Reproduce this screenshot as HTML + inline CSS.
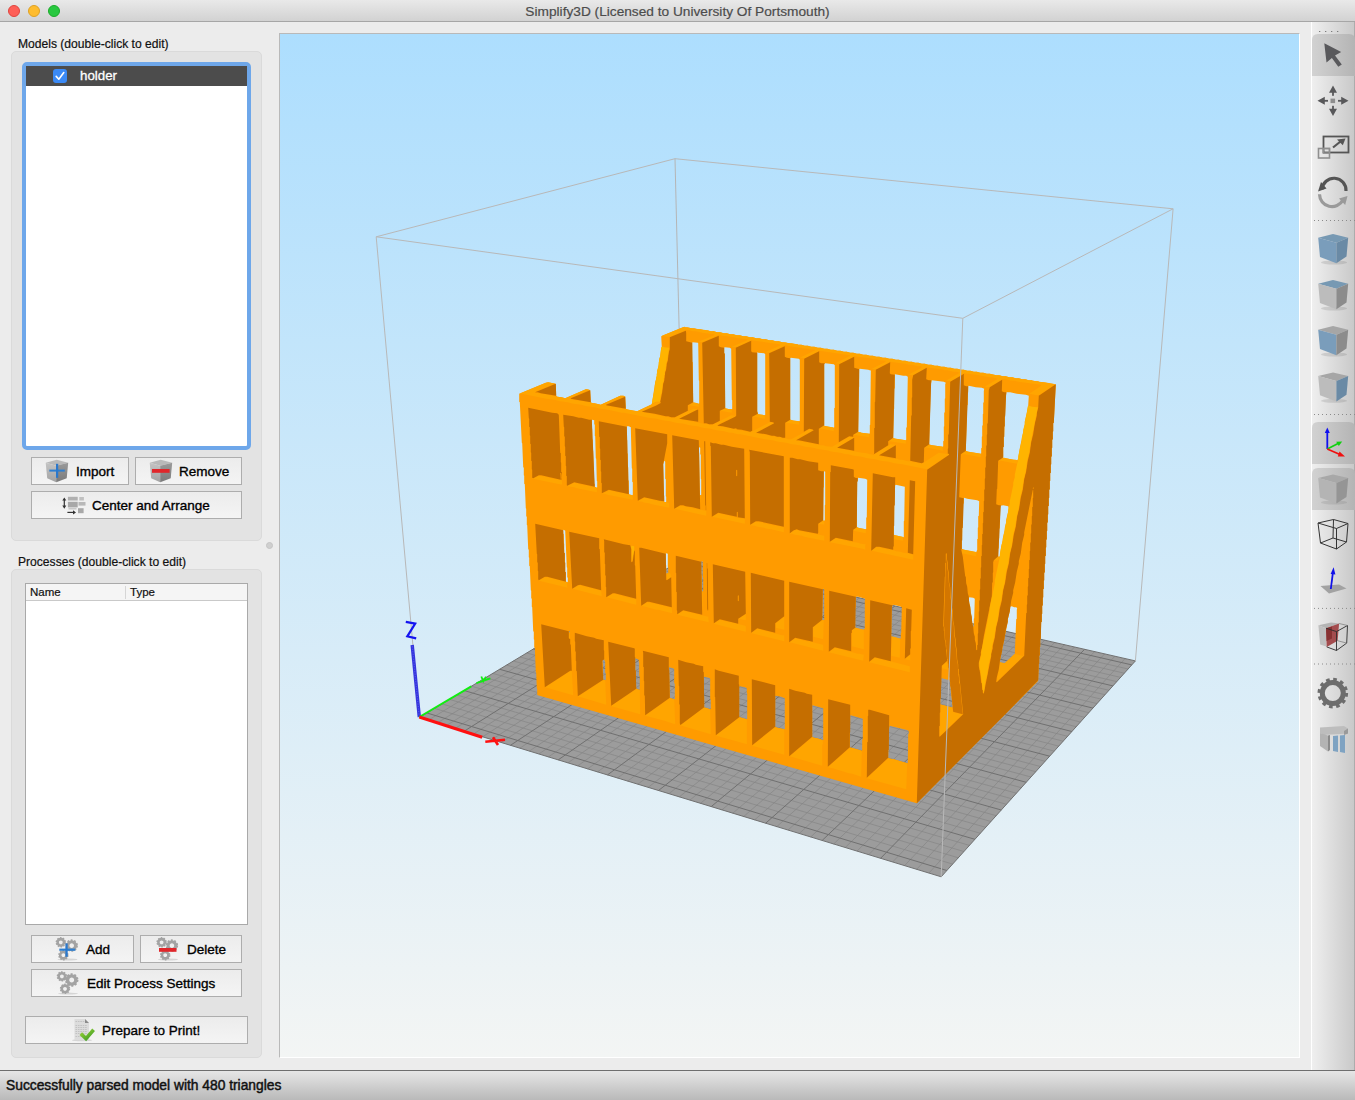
<!DOCTYPE html>
<html><head><meta charset="utf-8">
<style>
*{box-sizing:border-box;margin:0;padding:0}
html,body{width:1355px;height:1100px;overflow:hidden;background:#ececec;font-family:"Liberation Sans",sans-serif;color:#000}
.abs{position:absolute}
#title{left:0;top:0;width:1355px;height:22px;background:linear-gradient(#e9e9e9,#d2d2d2);border-bottom:1px solid #a6a6a6}
#title .t{position:absolute;left:0;width:1355px;top:4px;-webkit-text-stroke:0.2px #4c4c4c;text-align:center;font-size:13.7px;color:#4c4c4c}
.tl{position:absolute;top:5px;width:12px;height:12px;border-radius:50%}
.grp{position:absolute;background:#e3e3e3;border:1px solid #dadada;border-radius:5px}
.lbl{position:absolute;font-size:12.1px;color:#111;white-space:nowrap;-webkit-text-stroke:0.2px #111}
.btn{position:absolute;border:1px solid #adadad;background:linear-gradient(#ececec,#f4f4f4);font-size:13.5px;white-space:nowrap}
.btn span{position:absolute;top:6px;-webkit-text-stroke:0.35px #000}
#vp{left:279px;top:33px;width:1021px;height:1025px;background:linear-gradient(#addefe,#f3f5f4);border-top:1px solid #b9b9b9;border-left:1px solid #b9b9b9;border-right:1px solid #fff;border-bottom:1px solid #fff;overflow:hidden}
#tb{left:1311px;top:22px;width:44px;height:1048px;background:linear-gradient(90deg,#efefef,#c9c9c9);border-left:1px solid #fff;border-right:1px solid #acacac}
#status{left:0;top:1070px;width:1355px;height:30px;background:linear-gradient(#e6e6e6,#b9b9b9);border-top:1px solid #6e6e6e}
#status .t{position:absolute;left:6px;top:7px;font-size:13.8px;color:#111;white-space:nowrap;-webkit-text-stroke:0.45px #111}
</style></head><body>
<div id="title" class="abs">
  <div class="tl" style="left:8px;background:#fe5f57;border:0.5px solid #e0443e"></div>
  <div class="tl" style="left:28px;background:#febc2e;border:0.5px solid #dea123"></div>
  <div class="tl" style="left:48px;background:#28c840;border:0.5px solid #1aab29"></div>
  <div class="t">Simplify3D (Licensed to University Of Portsmouth)</div>
</div>

<!-- LEFT PANEL -->
<div class="lbl" style="left:18px;top:37px">Models (double-click to edit)</div>
<div class="grp" style="left:11px;top:51px;width:251px;height:490px"></div>
<div class="abs" style="left:22px;top:62px;width:229px;height:388px;border:4px solid #6ea7ea;border-radius:5px;background:#fff"></div>
<div class="abs" style="left:26px;top:66px;width:221px;height:20px;background:#4c4c4c"></div>
<div class="abs" style="left:53px;top:69px;width:14px;height:14px;background:#3b8af6;border-radius:3px"></div>
<svg class="abs" style="left:53px;top:69px" width="14" height="14"><path d="M3.2 7.4 L5.8 10.2 L10.8 3.6" stroke="#fff" stroke-width="1.6" fill="none" stroke-linecap="round" stroke-linejoin="round"/></svg>
<div class="lbl" style="left:80px;top:68px;font-size:13.3px;color:#fff;-webkit-text-stroke:0.3px #fff">holder</div>

<div class="btn" style="left:31px;top:457px;width:98px;height:28px"><span style="left:44px">Import</span></div>
<div class="btn" style="left:135px;top:457px;width:107px;height:28px"><span style="left:43px">Remove</span></div>
<div class="btn" style="left:31px;top:491px;width:211px;height:28px"><span style="left:60px">Center and Arrange</span></div>

<div class="abs" style="left:266px;top:542px;width:7px;height:7px;border-radius:50%;background:#cfcfcf;border:1px solid #c4c4c4"></div>

<div class="lbl" style="left:18px;top:555px">Processes (double-click to edit)</div>
<div class="grp" style="left:11px;top:569px;width:251px;height:489px"></div>
<div class="abs" style="left:25px;top:583px;width:223px;height:342px;border:1px solid #a9a9a9;background:#fff"></div>
<div class="abs" style="left:26px;top:584px;width:221px;height:17px;background:#f5f5f5;border-bottom:1px solid #c9c9c9"></div>
<div class="abs" style="left:125px;top:586px;width:1px;height:13px;background:#d6d6d6"></div>
<div class="lbl" style="left:30px;top:586px;font-size:11.5px">Name</div>
<div class="lbl" style="left:130px;top:586px;font-size:11.5px">Type</div>

<div class="btn" style="left:31px;top:935px;width:103px;height:28px"><span style="left:54px">Add</span></div>
<div class="btn" style="left:140px;top:935px;width:102px;height:28px"><span style="left:46px">Delete</span></div>
<div class="btn" style="left:31px;top:969px;width:211px;height:28px"><span style="left:55px">Edit Process Settings</span></div>
<div class="btn" style="left:25px;top:1016px;width:223px;height:28px"><span style="left:76px">Prepare to Print!</span></div>

<!-- VIEWPORT -->
<div id="vp" class="abs"></div>
<svg class="abs" style="left:0;top:0;pointer-events:none" width="1355" height="1100">
<defs><clipPath id="vpc"><rect x="280" y="34" width="1019" height="1023"/></clipPath></defs>
<g clip-path="url(#vpc)">
<polygon fill="#9c9c9c" points="419.4,717.5 941.2,876.8 1135.4,660.9 684.7,558.0"/>
<path stroke="#858585" stroke-width="0.7" fill="none" d="M428.3,720.2 L692.6,559.8 M437.2,723.0 L700.5,561.6 M446.2,725.7 L708.5,563.5 M455.2,728.4 L716.5,565.3 M473.4,734.0 L732.7,569.0 M482.6,736.8 L740.8,570.8 M491.8,739.6 L749.0,572.7 M501.1,742.5 L757.2,574.6 M519.9,748.2 L773.8,578.4 M529.4,751.1 L782.2,580.3 M538.9,754.0 L790.6,582.2 M548.5,756.9 L799.0,584.1 M567.9,762.9 L816.0,588.0 M577.7,765.9 L824.6,589.9 M587.6,768.9 L833.2,591.9 M597.5,771.9 L841.9,593.9 M617.6,778.0 L859.4,597.9 M627.7,781.1 L868.2,599.9 M637.9,784.2 L877.0,601.9 M648.2,787.3 L885.9,603.9 M668.9,793.7 L903.9,608.0 M679.3,796.9 L912.9,610.1 M689.9,800.1 L922.0,612.2 M700.5,803.3 L931.2,614.3 M721.9,809.9 L949.6,618.5 M732.8,813.2 L958.9,620.6 M743.7,816.5 L968.2,622.7 M754.6,819.9 L977.6,624.9 M776.8,826.6 L996.6,629.2 M788.0,830.1 L1006.1,631.4 M799.3,833.5 L1015.8,633.6 M810.7,837.0 L1025.4,635.8 M833.7,844.0 L1044.9,640.2 M845.3,847.5 L1054.7,642.5 M857.0,851.1 L1064.6,644.7 M868.7,854.7 L1074.6,647.0 M892.6,862.0 L1094.6,651.6 M904.6,865.6 L1104.7,653.9 M916.7,869.3 L1114.9,656.2 M928.9,873.1 L1125.1,658.5 M434.6,708.4 L952.7,864.1 M442.1,703.9 L958.3,857.8 M449.6,699.4 L963.9,851.5 M457.0,695.0 L969.5,845.4 M471.5,686.2 L980.4,833.3 M478.7,681.9 L985.7,827.3 M485.8,677.7 L991.0,821.5 M492.8,673.4 L996.2,815.7 M506.6,665.1 L1006.4,804.3 M513.4,661.0 L1011.5,798.7 M520.1,657.0 L1016.4,793.2 M526.8,653.0 L1021.3,787.7 M539.9,645.1 L1031.0,777.0 M546.4,641.2 L1035.8,771.7 M552.8,637.3 L1040.4,766.5 M559.2,633.5 L1045.1,761.3 M571.7,626.0 L1054.2,751.1 M577.9,622.3 L1058.7,746.1 M584.0,618.6 L1063.2,741.2 M590.0,615.0 L1067.5,736.3 M602.0,607.8 L1076.2,726.7 M607.8,604.3 L1080.4,722.0 M613.7,600.7 L1084.6,717.3 M619.4,597.3 L1088.8,712.7 M630.8,590.4 L1097.0,703.6 M636.5,587.0 L1101.0,699.1 M642.0,583.7 L1105.0,694.7 M647.6,580.4 L1109.0,690.3 M658.4,573.8 L1116.7,681.6 M663.8,570.6 L1120.6,677.4 M669.1,567.4 L1124.3,673.2 M674.4,564.2 L1128.1,669.0"/>
<path stroke="#707070" stroke-width="1.0" fill="none" d="M464.2,731.2 L724.6,567.1 M510.5,745.3 L765.5,576.5 M558.2,759.9 L807.5,586.0 M607.5,774.9 L850.6,595.9 M658.5,790.5 L894.9,606.0 M711.2,806.6 L940.4,616.4 M765.7,823.2 L987.1,627.0 M822.1,840.5 L1035.1,638.0 M880.6,858.3 L1084.6,649.3 M427.0,713.0 L946.9,870.5 M464.3,690.6 L974.9,839.3 M499.7,669.3 L1001.3,810.0 M533.4,649.0 L1026.2,782.3 M565.5,629.7 L1049.7,756.2 M596.0,611.4 L1071.9,731.5 M625.2,593.8 L1092.9,708.1 M653.0,577.1 L1112.9,685.9 M679.6,561.1 L1131.8,664.9 M419.4,717.5 L941.2,876.8 L1135.4,660.9 L684.7,558.0 Z"/>
<path stroke="#b5b5b5" stroke-width="1" fill="none" d="M684.7,558.0 L675.0,158.7"/>
<path fill="rgb(255,155,0)" d="M519.2 393.8 519.2 401.8 519.8 402.2 521.8 442.8 522.2 443.2 523.2 467.2 523.8 467.8 523.8 475.2 524.2 475.8 524.2 483.8 524.8 484.2 525.8 508.2 526.2 508.8 526.2 516.2 526.8 516.8 526.8 524.8 527.2 525.2 528.2 549.2 528.8 549.8 528.8 557.2 529.2 557.8 529.2 565.8 529.8 566.2 530.8 590.2 531.2 590.8 531.2 598.2 531.8 598.8 531.8 606.8 532.2 607.2 533.2 631.2 533.8 631.8 533.8 639.2 534.2 639.8 534.2 647.2 534.8 647.8 535.8 672.2 536.2 672.8 536.8 688.2 537.2 688.8 537.2 694.8 537.8 695.2 916.8 803.2 1037.8 681.2 1038.2 680.2 1038.8 663.8 1039.2 663.2 1039.2 655.8 1039.8 655.2 1039.8 647.2 1040.2 646.8 1040.2 639.2 1040.8 638.8 1041.2 622.2 1041.8 621.8 1041.8 614.2 1042.2 613.8 1042.2 605.8 1042.8 605.2 1042.8 597.8 1043.2 597.2 1043.2 589.2 1043.8 588.8 1043.8 580.8 1044.2 580.2 1044.2 572.8 1044.8 572.2 1044.8 564.2 1045.2 563.8 1045.2 556.2 1045.8 555.8 1045.8 547.8 1046.2 547.2 1046.2 539.8 1046.8 539.2 1046.8 531.2 1047.2 530.8 1047.2 522.8 1047.8 522.2 1047.8 514.8 1048.2 514.2 1048.2 506.2 1048.8 505.8 1048.8 498.2 1049.2 497.8 1049.2 489.8 1049.8 489.2 1049.8 481.2 1050.2 480.8 1050.2 473.2 1050.8 472.8 1050.8 464.8 1051.2 464.2 1051.2 456.8 1051.8 456.2 1051.8 448.2 1052.2 447.8 1052.2 439.8 1052.8 439.2 1052.8 431.8 1053.2 431.2 1053.2 423.2 1053.8 422.8 1055.8 384.2 1038.8 381.8 1038.2 381.2 1035.2 381.2 1031.8 380.2 1028.8 380.2 1025.2 379.2 1022.2 379.2 1018.8 378.2 1015.8 378.2 1012.2 377.2 1009.2 377.2 1005.8 376.2 1002.8 376.2 999.2 375.2 996.2 375.2 989.8 373.8 986.8 373.8 983.2 372.8 980.2 372.8 976.8 371.8 973.8 371.8 970.2 370.8 967.2 370.8 963.8 369.8 960.8 369.8 957.2 368.8 954.2 368.8 950.8 367.8 947.8 367.8 944.2 366.8 941.2 366.8 937.8 365.8 934.8 365.8 931.2 364.8 928.2 364.8 924.8 363.8 921.8 363.8 918.2 362.8 915.2 362.8 911.8 361.8 908.8 361.8 905.2 360.8 902.2 360.8 898.8 359.8 895.8 359.8 892.2 358.8 889.2 358.8 885.8 357.8 882.8 357.8 879.2 356.8 876.2 356.8 872.8 355.8 869.8 355.8 866.2 354.8 863.2 354.8 859.8 353.8 856.8 353.8 853.2 352.8 850.2 352.8 846.8 351.8 843.8 351.8 840.2 350.8 837.2 350.8 833.8 349.8 830.8 349.8 827.2 348.8 824.2 348.8 820.8 347.8 817.8 347.8 814.2 346.8 811.2 346.8 807.8 345.8 804.8 345.8 801.2 344.8 798.2 344.8 797.8 344.2 782.2 342.2 778.8 341.2 775.8 341.2 772.2 340.2 769.2 340.2 765.8 339.2 762.8 339.2 759.2 338.2 756.2 338.2 752.8 337.2 749.8 337.2 746.2 336.2 743.2 336.2 739.8 335.2 736.8 335.2 733.2 334.2 730.2 334.2 726.8 333.2 723.8 333.2 720.2 332.2 717.2 332.2 713.8 331.2 710.8 331.2 707.2 330.2 704.2 330.2 700.8 329.2 697.8 329.2 694.2 328.2 691.2 328.2 687.8 327.2 684.8 327.2 684.2 326.8 661.2 336.2 661.8 347.2 661.2 347.8 660.2 356.2 659.2 359.2 659.2 361.8 658.8 362.2 658.8 364.8 657.2 370.8 657.2 373.2 656.8 373.8 656.8 376.2 655.2 382.2 651.8 404.2 637.2 411.2 627.8 409.8 625.8 408.8 625.2 396.2 623.2 395.8 620.2 395.8 600.8 404.8 594.8 403.2 592.2 403.2 590.8 402.2 590.2 390.2 587.2 389.2 585.8 389.2 565.2 398.2 562.2 397.2 557.2 396.8 556.2 395.8 555.8 383.8 548.2 382.2 545.8 382.8ZM889.8 725.8 907.8 730.2 908.8 731.2 908.8 733.8 908.2 734.2 907.8 762.8 907.2 763.2 893.8 759.2 890.2 758.8 888.2 757.8 888.8 729.8ZM850.8 715.2 862.8 718.8 862.8 739.2 862.2 739.8 862.2 750.2 861.8 750.8 849.8 747.2 850.2 715.8ZM812.8 705.2 823.2 708.2 823.2 739.8 822.8 740.2 817.2 738.2 813.8 737.8 812.2 736.8 812.2 705.8ZM775.8 695.8 781.2 696.8 784.8 698.2 784.8 728.8 784.2 729.2 777.2 727.8 775.2 726.8 775.2 696.2ZM739.8 686.2 745.2 687.2 746.8 688.2 746.8 692.8 747.2 693.2 747.2 718.8 746.8 719.2 740.8 717.8 739.2 716.8 739.2 686.8ZM941.8 678.2 949.8 680.2 951.8 700.2 952.2 700.8 952.2 704.8 952.8 705.2 952.2 707.8 940.2 704.2 940.8 685.2 941.2 684.8 941.2 678.8ZM704.2 676.8 709.2 677.8 710.2 678.8 710.2 699.2 710.8 699.8 710.8 708.8 710.2 709.2 704.2 707.2 704.2 696.8 703.8 696.2 703.8 677.2ZM669.2 667.2 673.2 668.2 674.2 669.2 674.2 683.2 674.8 683.8 674.8 698.8 674.2 699.2 669.8 697.8 669.2 669.8 668.8 669.2ZM604.2 659.2 605.2 662.2 605.2 672.8 605.8 673.2 605.8 679.8 605.2 680.2 604.2 680.2 603.2 679.2 603.2 674.2 602.8 673.8 602.8 663.2 602.2 660.8ZM635.8 658.2 638.8 659.8 638.8 662.2 639.2 662.8 639.2 675.8 639.8 676.2 639.8 689.2 639.2 689.8 637.2 689.2 636.2 688.2 635.8 670.8 635.2 670.2 635.2 658.8ZM568.8 632.2 569.2 630.8 570.2 631.8 569.2 632.8ZM1011.8 606.2 1014.2 607.2 1016.2 607.2 1017.2 608.2 1016.8 609.8 1016.8 618.8 1016.2 619.2 1014.8 653.8 1004.8 663.2 1001.2 662.8 999.8 661.8 1007.8 621.8 1007.8 619.2 1009.8 611.2 1010.2 606.8ZM892.8 604.8 899.8 606.2 901.8 607.2 901.2 632.8 900.8 633.2 900.8 638.2 900.2 638.8 891.2 636.2 891.8 607.8ZM969.2 597.2 973.2 597.8 974.8 598.8 974.2 618.2 973.8 618.8 973.8 626.2 973.2 626.8 972.8 626.2 970.2 606.8 968.8 599.8ZM856.2 596.8 858.2 596.8 865.2 598.8 864.8 600.8 864.8 628.2 863.8 629.8 856.2 628.2 855.2 627.2 855.2 607.8 855.8 607.2 855.8 597.2ZM823.2 588.8 824.2 589.8 824.2 619.8 823.8 620.2 822.2 619.8 822.8 589.2ZM701.8 561.2 702.8 561.8 702.8 577.2 703.2 577.8 703.2 591.2 702.8 591.8 701.8 590.8 701.8 574.8 701.2 574.2 701.2 561.8ZM666.2 553.2 667.8 553.8 667.8 566.8 668.2 567.2 668.2 572.8 666.8 573.8 666.2 573.2 666.2 565.2 665.8 564.8 665.8 553.8ZM563.8 529.8 565.2 530.8 566.8 567.2 567.2 567.8 567.2 577.2 567.8 577.8 567.8 581.8 567.2 582.2 565.8 581.2 565.8 572.2 565.2 571.8 565.2 562.8 564.8 562.2 564.8 553.2 564.2 552.8 564.2 543.8 563.8 543.2 563.8 534.2 563.2 533.8 563.2 530.2ZM1003.2 505.2 1008.2 506.2 1008.8 508.8 1006.2 519.8 1006.2 522.2 1004.8 527.8 1004.8 530.2 1002.8 538.2 1002.8 540.8 1001.2 546.2 999.8 556.2 998.8 556.8 998.2 556.2 998.2 548.8 998.8 548.2 998.8 538.8 999.2 538.2 999.2 528.8 999.8 528.2 1000.2 508.2 1000.8 505.8ZM964.2 497.8 967.2 498.8 977.2 500.2 979.2 501.2 978.8 515.8 978.2 516.2 978.2 527.2 977.8 527.8 977.8 538.8 977.2 539.2 977.2 549.8 976.2 552.2 963.8 549.8 961.8 548.8 963.2 503.8 963.8 503.2 963.8 498.2ZM895.8 484.8 904.8 486.8 904.2 520.8 903.8 521.2 903.8 536.8 903.2 537.2 893.8 534.8 894.8 485.8ZM858.2 477.8 865.2 478.8 867.2 479.8 866.8 517.2 866.2 517.8 866.2 528.8 865.8 529.2 857.8 527.8 856.8 526.8 857.2 481.8ZM824.8 471.2 825.2 471.8 825.2 504.8 824.8 505.2 824.8 520.2 823.8 520.8 823.2 520.2 823.2 487.8 823.8 487.2 823.8 471.8ZM664.2 460.8 665.2 461.8 665.2 478.8 665.8 479.2 665.8 496.2 666.2 496.8 666.2 501.8 665.8 502.2 664.2 501.8 664.2 495.8 663.8 495.2 663.2 464.2ZM699.2 447.2 700.2 447.8 700.2 454.2 700.8 454.8 700.8 478.8 701.2 479.2 701.2 494.8 700.8 495.2 699.8 494.8 699.2 452.8 698.8 452.2 698.8 447.8ZM627.2 426.2 628.8 426.2 630.8 427.2 631.8 468.2 632.2 468.8 632.2 481.8 632.8 482.2 632.8 494.8 632.2 495.2 629.8 494.8 628.8 493.8 628.8 480.8 628.2 480.2 628.2 467.2 627.8 466.8 627.8 453.8 627.2 453.2 627.2 440.2 626.8 439.8 626.8 426.8ZM592.2 419.8 594.2 420.2 594.2 424.2 594.8 424.8 594.8 435.8 595.2 436.2 595.8 458.2 596.2 458.8 596.8 480.8 597.2 481.2 597.2 487.2 596.8 487.8 594.8 486.8 594.8 484.2 594.2 483.8 593.2 450.8 592.8 450.2 592.8 439.8 592.2 439.2 592.2 428.8 591.8 428.2 591.8 420.2ZM1006.8 391.8 1007.2 392.2 1010.2 392.2 1016.8 393.8 1025.8 394.8 1028.8 395.8 1028.2 405.8 1024.8 421.8 1024.8 424.2 1019.8 448.2 1018.2 458.8 1017.2 460.2 1004.8 458.2 1002.8 457.2 1003.2 456.8 1003.2 447.2 1003.8 446.8 1003.8 437.2 1004.2 436.8 1005.8 396.2ZM968.8 385.8 975.8 387.2 981.8 387.8 984.2 388.8 983.8 391.2 983.8 402.2 983.2 402.8 983.2 413.8 982.8 414.2 982.8 425.2 982.2 425.8 982.2 436.2 981.8 436.8 981.8 447.8 981.2 448.2 981.2 453.2 980.8 453.8 968.2 451.8 965.8 450.8 967.2 405.2 967.8 404.8 967.8 392.8 968.2 392.2 968.2 386.2ZM931.8 380.2 943.8 381.8 945.8 382.8 945.2 384.2 945.2 398.2 944.8 398.8 944.8 412.2 944.2 412.8 944.2 426.2 943.8 426.8 943.8 440.8 943.2 441.2 943.2 446.2 942.8 446.8 931.8 445.2 929.2 444.2 930.8 384.8ZM895.2 374.2 903.2 375.8 906.2 375.8 907.8 376.8 906.8 427.2 906.2 427.8 906.2 439.8 905.8 440.2 895.2 438.8 893.2 437.8 893.8 409.2 894.2 408.8 894.2 388.8 894.8 388.2 894.8 374.8ZM859.8 368.8 868.2 369.8 871.2 370.8 870.8 371.2 870.2 424.8 869.8 425.2 869.8 433.2 869.2 433.8 861.2 432.8 858.2 431.8 858.8 387.2 859.2 386.8 859.2 369.2ZM825.2 363.2 833.8 364.2 834.8 365.2 834.8 407.8 834.2 408.2 834.2 427.2 833.8 427.8 824.2 425.8 824.2 364.2ZM790.8 357.8 798.8 358.8 799.8 359.8 799.8 420.8 799.2 421.2 791.2 420.2 790.2 419.2 790.2 358.2ZM757.8 352.2 758.2 352.8 764.2 353.2 765.2 354.2 765.2 414.8 764.8 415.2 758.2 414.2 757.2 411.2 757.2 352.8ZM724.8 347.2 729.8 347.8 731.2 348.8 731.8 399.8 732.2 400.2 732.2 408.8 731.8 409.2 726.2 408.8 725.2 407.8 724.8 353.8 724.2 353.2 724.2 347.8ZM692.8 342.2 697.8 342.8 698.2 343.2 698.8 380.2 699.2 380.8 699.2 403.2 698.8 403.8 693.2 402.2 692.8 362.2 692.2 361.8 692.2 342.8Z"/>
<path fill="rgb(255,165,0)" d="M866.8 778.2 906.2 789.2 907.2 763.2 893.8 759.2 888.2 758.2ZM827.8 767.2 832.8 768.2 848.8 773.2 852.2 773.8 861.2 776.8 861.8 750.8 851.8 747.8 849.8 747.8ZM789.8 756.2 822.2 765.8 822.2 744.8 822.8 744.2 822.8 740.2 820.8 739.2 812.2 737.2ZM784.2 729.2 775.2 727.2 752.2 745.8 784.2 754.8ZM746.8 719.2 740.2 717.2 738.8 717.8 717.2 734.2 716.2 735.8 747.2 744.2 746.8 742.2ZM710.2 709.2 705.8 707.8 703.2 708.2 680.2 725.2 710.8 734.2ZM940.8 704.8 939.8 736.2 962.2 714.8 962.2 714.2 953.2 712.2 951.8 707.2ZM674.2 699.2 669.8 698.2 645.2 715.8 662.8 720.2 675.2 724.2ZM639.8 690.2 636.8 688.8 612.2 705.2 611.8 706.2 640.2 714.2ZM605.2 680.2 603.8 679.8 577.8 696.8 581.2 697.2 606.2 704.8ZM571.8 671.2 570.2 671.2 545.2 687.2 573.2 695.2ZM947.2 661.2 942.2 665.8 942.2 668.2 948.2 669.8ZM869.2 662.2 909.8 672.2 909.8 666.2 886.2 660.2 884.2 660.2 874.8 657.8ZM910.2 654.8 904.8 659.2 910.2 660.2ZM1023.2 656.2 1016.2 654.2 1014.2 654.2 1004.8 663.2 1000.2 662.2 996.8 681.8ZM828.8 652.2 863.2 660.8 863.8 654.8 859.8 653.8 857.8 653.8 835.2 647.8ZM789.8 642.2 823.2 650.8 823.2 645.2 822.8 644.8 808.8 641.2 806.8 641.2 795.2 638.2ZM891.8 636.8 891.2 655.8 899.8 657.8 900.2 638.8 893.8 636.8ZM569.8 632.2 569.2 632.8 569.2 638.2 570.2 638.8ZM751.8 632.8 751.8 633.2 784.2 641.2 784.2 635.2 782.2 635.2 757.8 628.8ZM855.8 627.8 852.2 630.2 852.2 632.8 851.8 633.2 851.8 646.2 863.8 649.2 863.8 629.8ZM822.2 620.2 813.2 627.2 813.2 636.8 823.2 639.2 823.8 620.2ZM713.8 623.8 745.8 631.8 745.8 626.2 745.2 625.8 731.2 622.2 729.2 622.2 719.8 619.8ZM784.2 616.8 775.8 623.2 775.8 627.8 784.2 629.8ZM745.8 614.2 738.8 618.8 745.8 620.2ZM677.2 614.8 708.8 622.2 708.2 616.8 683.2 610.8ZM641.8 605.8 656.2 609.8 658.2 609.8 672.2 613.2 671.8 607.8 655.8 603.8 647.2 602.2ZM606.8 597.2 636.2 604.8 636.2 599.2 627.2 597.2 614.8 593.8 612.8 593.8ZM702.2 591.2 702.8 609.8 703.2 609.8 702.8 591.8ZM572.8 588.8 601.8 596.2 601.2 590.8 580.2 585.2 578.8 585.2ZM539.2 580.2 539.2 580.8 567.8 587.8 567.2 586.8 567.2 582.2 547.2 577.2 544.8 577.2ZM670.2 573.2 667.2 573.2 666.8 573.8 666.8 579.8 671.2 576.8ZM999.2 556.8 998.2 556.8 996.2 558.2 994.8 560.2 998.2 560.8ZM961.8 549.2 962.2 553.2 976.2 556.2 976.2 552.2 975.2 551.8ZM871.8 550.8 913.2 559.8 913.2 554.8 910.2 553.8 903.2 552.8 900.8 551.8 896.2 551.2 893.8 550.2 886.8 549.2 879.2 547.2 876.2 547.2ZM830.2 541.8 830.2 542.2 862.8 548.8 865.2 549.8 865.2 545.2 865.8 544.8 865.2 544.2 860.8 543.8 858.2 542.8 851.2 541.8 836.8 538.2 834.8 538.8ZM894.2 535.2 894.2 539.2 902.8 540.8 903.2 539.2 902.8 536.8ZM790.2 533.2 790.2 533.8 792.2 533.8 794.8 534.8 801.8 535.8 804.2 536.8 824.2 540.8 824.2 535.8 799.2 530.8 796.8 529.8 793.8 530.8ZM853.8 529.8 853.8 530.8 865.8 533.2 865.8 529.2 859.8 528.2 857.2 527.2ZM750.2 525.2 754.8 525.8 757.2 526.8 764.2 527.8 766.8 528.8 771.2 529.2 783.8 532.2 783.8 527.2 763.8 523.2 761.2 522.2 755.8 521.8ZM824.2 520.8 822.8 520.8 819.8 522.8 819.2 523.8 824.2 524.8ZM712.2 516.8 744.8 523.8 744.8 518.8 737.8 517.8 718.8 513.2ZM674.8 508.8 706.2 515.8 706.2 510.8 695.2 508.8 683.2 505.8 680.2 505.8ZM637.8 501.2 642.2 501.8 644.8 502.8 649.2 503.2 651.8 504.2 669.2 507.8 669.2 503.2 668.8 502.8 652.8 499.8 650.2 498.8 644.2 497.8ZM700.2 495.2 700.2 498.8 700.8 498.8 700.8 495.2ZM602.8 493.2 602.8 493.8 604.8 493.8 607.2 494.8 632.8 499.8 632.8 496.2 631.2 494.8 626.8 494.2 624.2 493.2 617.2 492.2 609.8 490.2ZM567.8 485.8 567.8 486.2 574.2 487.2 576.8 488.2 596.8 492.2 596.8 487.8 595.8 487.2 591.2 486.8 588.8 485.8 581.8 484.8 574.2 482.8ZM532.8 478.8 562.2 484.8 561.8 480.2 548.8 477.8 546.2 476.8 538.8 475.8ZM998.8 460.8 1001.2 460.8 1016.8 463.8 1017.2 460.2 1015.8 459.8 1013.2 459.8 1004.2 457.8 1002.2 458.2ZM961.8 453.8 962.2 454.2 964.8 454.2 980.8 457.2 980.8 453.8 965.8 451.2ZM925.2 447.2 942.8 450.8 942.8 446.8 928.8 444.8ZM889.2 440.8 889.8 441.2 905.8 443.8 905.8 440.2 893.2 438.2ZM853.8 434.8 869.2 437.2 869.2 433.8 861.2 432.8 860.8 432.2 857.8 432.2ZM819.8 428.2 833.8 431.2 833.8 427.8 832.8 427.2 824.8 426.2 824.2 425.8ZM786.2 422.2 786.2 422.8 799.2 424.8 799.2 421.2 793.8 420.8 790.8 419.8ZM752.8 416.8 755.2 416.8 764.8 418.8 764.8 415.2 757.2 414.2ZM720.2 410.8 731.8 412.8 731.8 409.2 729.2 409.2 725.8 408.2ZM688.8 405.2 699.2 406.8 698.8 403.8 695.2 402.8 693.2 402.8ZM519.2 393.8 521.8 393.8 546.2 398.8 554.2 399.8 559.8 401.2 567.8 402.2 573.2 403.8 581.2 404.8 586.8 406.2 594.8 407.2 600.2 408.8 608.2 409.8 621.8 412.8 624.2 412.8 648.8 417.8 656.8 418.8 662.2 420.2 670.2 421.2 675.8 422.8 683.8 423.8 689.2 425.2 697.2 426.2 702.8 427.8 710.8 428.8 716.2 430.2 724.2 431.2 729.8 432.8 732.2 432.8 737.8 434.2 740.2 434.2 764.8 439.2 772.8 440.2 778.2 441.8 786.2 442.8 791.8 444.2 799.8 445.2 805.2 446.8 813.2 447.8 818.8 449.2 826.8 450.2 832.2 451.8 840.2 452.8 845.8 454.2 848.2 454.2 853.8 455.8 861.8 456.8 867.2 458.2 875.2 459.2 880.8 460.8 888.8 461.8 894.2 463.2 902.2 464.2 926.8 469.2 948.8 454.8 948.8 454.2 938.8 452.8 921.8 463.8 921.2 463.2 918.8 463.2 915.8 462.2 913.2 462.2 910.2 461.2 907.8 461.2 902.2 459.8 899.8 459.8 896.8 458.8 894.2 458.8 879.2 455.8 878.8 455.2 895.8 444.8 890.2 444.2 873.8 454.8 869.8 454.2 866.8 453.2 858.8 452.2 836.8 447.8 854.2 437.2 849.2 436.8 832.2 446.8 826.2 446.2 823.2 445.2 820.8 445.2 795.8 440.2 800.2 437.2 813.2 430.2 809.8 429.2 791.2 439.2 788.2 439.2 785.2 438.2 782.8 438.2 779.8 437.2 777.2 437.2 774.2 436.2 771.8 436.2 766.2 434.8 756.2 433.2 755.8 432.8 773.8 423.2 769.8 422.2 750.2 432.2 722.8 426.8 720.2 426.8 717.2 425.8 717.8 424.8 735.2 416.2 734.8 415.8 731.2 415.2 712.8 424.8 709.2 424.8 706.2 423.8 703.8 423.8 678.8 418.8 683.8 415.8 684.8 415.8 697.2 409.2 698.2 409.2 693.2 408.8 674.8 417.8 671.2 417.8 641.2 411.8 660.8 402.8 659.2 402.2 656.2 402.2 637.2 411.2 605.8 405.2 606.2 404.2 625.2 396.2 623.2 395.8 620.2 395.8 600.8 404.8 586.8 401.8 573.2 399.8 570.2 398.8 570.8 397.8 589.8 389.8 585.8 389.2 565.2 398.2 543.2 393.8 535.2 392.8 534.8 392.2 537.2 390.8 555.2 383.8 548.2 382.2 545.8 382.8ZM661.8 335.8 666.8 336.8 670.2 336.8 685.2 330.2 689.2 330.2 692.8 331.2 695.8 331.2 702.2 332.8 714.2 334.2 714.8 334.8 713.2 335.8 698.2 341.8 700.8 341.8 701.2 342.2 704.8 341.2 717.8 335.2 721.2 335.2 721.8 335.8 731.2 336.8 737.8 338.2 747.2 339.2 747.8 339.8 746.2 340.8 731.8 346.8 733.2 347.2 737.2 346.8 751.2 340.2 779.2 344.2 780.8 345.2 765.2 352.2 767.8 352.8 770.8 352.2 785.2 345.2 795.8 347.2 801.8 347.8 802.2 348.2 808.2 348.8 808.8 349.2 814.8 349.8 815.2 350.2 799.8 357.8 802.2 357.8 802.8 358.2 804.2 358.2 819.2 350.8 849.8 355.2 850.2 355.8 835.2 363.2 839.8 363.8 854.2 356.2 869.8 358.2 873.2 359.2 876.2 359.2 879.8 360.2 885.2 360.8 885.8 361.2 884.8 362.2 871.8 368.8 875.2 369.8 889.8 361.8 905.2 363.8 908.8 364.8 911.8 364.8 918.2 366.2 921.2 366.2 921.8 367.2 919.8 368.8 908.2 374.8 912.8 375.2 926.8 367.2 943.8 369.8 944.2 370.2 947.2 370.2 953.8 371.8 956.8 371.8 959.8 372.8 945.8 380.8 950.8 381.2 963.8 373.2 976.2 374.8 989.2 377.2 992.2 377.2 997.8 378.8 984.8 386.8 985.8 387.2 989.2 387.2 1002.2 379.2 1005.2 379.2 1011.8 380.8 1014.8 380.8 1018.2 381.8 1040.8 384.8 1041.2 385.8 1029.2 393.8 1036.8 395.2 1039.8 394.8 1055.2 384.2 1044.8 382.2 1038.8 381.8 1038.2 381.2 1032.2 380.8 1031.8 380.2 1028.8 380.2 1025.2 379.2 1022.2 379.2 1018.8 378.2 1015.8 378.2 1012.2 377.2 1009.2 377.2 1005.8 376.2 1002.8 376.2 999.2 375.2 996.2 375.2 989.8 373.8 986.8 373.8 983.2 372.8 980.2 372.8 976.8 371.8 973.8 371.8 970.2 370.8 967.2 370.8 963.8 369.8 960.8 369.8 957.2 368.8 954.2 368.8 950.8 367.8 947.8 367.8 944.2 366.8 941.2 366.8 937.8 365.8 934.8 365.8 931.2 364.8 928.2 364.8 924.8 363.8 921.8 363.8 918.2 362.8 915.2 362.8 911.8 361.8 908.8 361.8 905.2 360.8 902.2 360.8 898.8 359.8 895.8 359.8 892.2 358.8 889.2 358.8 885.8 357.8 882.8 357.8 879.2 356.8 876.2 356.8 872.8 355.8 869.8 355.8 866.2 354.8 863.2 354.8 859.8 353.8 856.8 353.8 853.2 352.8 850.2 352.8 846.8 351.8 843.8 351.8 840.2 350.8 837.2 350.8 833.8 349.8 830.8 349.8 827.2 348.8 824.2 348.8 820.8 347.8 817.8 347.8 814.2 346.8 811.2 346.8 807.8 345.8 804.8 345.8 801.2 344.8 798.2 344.8 791.8 343.2 788.8 343.2 785.2 342.2 782.2 342.2 778.8 341.2 775.8 341.2 772.2 340.2 769.2 340.2 765.8 339.2 762.8 339.2 759.2 338.2 756.2 338.2 752.8 337.2 749.8 337.2 746.2 336.2 743.2 336.2 739.8 335.2 736.8 335.2 733.2 334.2 730.2 334.2 726.8 333.2 723.8 333.2 720.2 332.2 717.2 332.2 713.8 331.2 710.8 331.2 707.2 330.2 684.8 327.2 684.2 326.8Z"/>
<path fill="rgb(197,110,0)" d="M869.8 709.8 868.2 709.8 868.2 715.8 867.8 716.2 867.8 741.8 867.2 742.2 866.8 777.8 888.2 757.8 888.2 750.2 888.8 749.8 889.2 715.2ZM828.2 699.2 827.8 766.8 849.8 747.2 849.8 732.8 850.2 732.2 850.2 704.8ZM789.2 688.8 789.2 756.2 812.2 736.8 812.2 694.8 806.8 693.8 804.8 692.8 795.2 690.8ZM751.8 679.2 752.2 745.2 775.2 726.8 775.2 685.2ZM714.8 669.2 714.8 696.8 715.2 697.2 715.8 735.2 739.2 717.2 739.2 684.8 738.8 684.2 738.8 675.8 718.8 670.8ZM678.2 659.8 678.8 685.8 679.2 686.2 679.2 704.2 679.8 704.8 679.8 723.2 680.2 724.8 680.8 724.8 704.2 707.2 703.8 672.2 703.2 671.8 703.2 666.2 695.8 664.8 693.8 663.8 686.2 662.2ZM642.8 650.8 643.2 652.8 643.2 666.8 643.8 667.2 643.8 680.8 644.2 681.2 644.2 695.2 644.8 695.8 645.2 715.2 669.8 697.8 669.2 669.8 668.8 669.2 668.8 657.2ZM608.2 641.8 611.2 705.8 636.2 688.8 635.8 670.8 635.2 670.2 635.2 657.2 634.8 656.8 634.8 648.8 634.2 648.2ZM574.8 632.8 574.8 641.2 575.2 641.8 575.2 651.2 575.8 651.8 575.8 660.8 576.2 661.2 576.2 670.8 576.8 671.2 577.8 696.2 603.2 679.8 602.2 660.8 604.2 659.2 604.2 650.8 603.8 650.2 603.8 640.2 596.2 638.8 594.2 637.8 586.8 636.2ZM541.2 624.2 544.8 687.2 570.2 670.8 571.8 670.8 570.8 644.8 570.2 644.2 570.2 639.2 568.8 638.2 568.8 631.2ZM906.2 608.2 904.8 658.8 910.2 654.2 910.2 648.8 910.8 648.2 910.8 631.2 911.2 630.8 911.8 609.8ZM870.2 600.2 869.2 661.8 874.8 657.2 890.8 661.2 891.8 607.8 892.2 605.2ZM829.2 590.8 828.8 651.8 834.8 647.2 851.2 651.2 851.2 633.2 851.8 632.8 851.8 630.2 855.2 627.8 855.8 596.8ZM789.2 581.8 789.2 642.2 795.2 637.8 812.8 641.8 812.8 627.2 822.2 619.8 822.8 589.2ZM750.8 572.8 751.2 632.8 757.2 628.2 775.2 632.8 775.2 623.2 784.2 616.2 784.2 580.8ZM712.8 564.2 713.8 623.2 719.8 619.2 738.2 623.8 738.2 618.8 745.8 613.8 745.2 571.8ZM738.2 595.2 738.8 595.8 738.8 600.8 738.2 601.2 737.8 600.8 737.8 595.8ZM706.8 562.8 707.2 608.8 707.8 610.8 708.2 610.2 707.8 568.8 707.2 568.2 707.2 563.2ZM675.8 555.8 675.8 572.8 676.2 573.2 676.2 591.8 676.8 592.2 676.8 610.2 677.2 610.8 677.2 614.2 683.2 610.2 702.2 614.8 701.2 561.8ZM639.2 547.8 641.2 605.8 647.2 601.8 649.2 601.8 671.8 607.2 671.2 577.2 666.8 580.2 666.2 579.8 665.8 553.8 641.2 547.8ZM603.8 539.2 604.2 541.2 604.2 552.2 604.8 552.8 604.8 563.8 605.2 564.2 605.2 575.2 605.8 575.8 605.8 586.8 606.2 587.2 606.2 597.2 612.8 593.2 614.8 593.2 636.2 598.8 635.2 565.8 634.8 565.2 634.8 551.8 634.2 550.2 632.8 561.2 631.8 562.2 631.2 561.8 631.2 548.8 630.2 545.2 623.8 544.2ZM569.2 531.8 572.2 588.8 577.8 585.2 580.2 584.8 601.2 590.2 599.8 549.2 599.2 548.8 599.2 538.2ZM535.2 523.8 536.8 553.8 537.2 554.2 537.2 562.2 537.8 562.8 537.8 570.8 538.2 571.2 538.2 579.2 538.8 580.2 544.8 576.8 547.2 576.8 566.2 581.8 565.8 581.2 565.8 572.2 565.2 571.8 565.2 562.8 564.8 562.2 564.8 553.2 564.2 552.8 563.2 530.2ZM909.8 480.2 907.8 552.8 913.2 554.2 915.2 481.2ZM872.8 473.2 871.2 550.8 876.2 546.8 879.2 546.8 893.2 549.8 893.2 546.8 893.8 546.2 893.8 526.2 894.2 525.8 894.2 505.8 894.8 505.2 895.2 477.2 892.8 477.2ZM830.8 465.2 830.8 471.8 830.2 472.2 829.8 541.8 835.8 537.8 852.8 541.2 853.2 529.8 856.8 527.2 857.2 481.8 857.8 481.2 857.8 478.2 855.2 477.8 853.8 476.8 853.8 469.8 852.8 469.2ZM789.8 457.8 789.8 533.2 793.8 530.2 796.8 529.2 799.2 530.2 817.8 533.8 818.2 532.8 818.2 523.8 823.2 520.2 823.8 471.2 821.2 471.2 818.2 470.2 818.2 462.8 808.2 461.2 800.2 459.2 797.8 459.2 792.2 457.8ZM749.2 449.8 749.8 452.2 750.2 524.8 755.8 521.2 758.8 521.2 783.8 526.8 783.8 456.2ZM895.8 445.2 879.2 455.2 895.8 458.2ZM710.2 442.2 710.2 445.8 710.8 446.2 711.8 516.8 718.2 512.8 736.8 516.8 736.8 512.2 737.2 511.8 737.8 512.2 737.8 517.2 744.8 518.2 744.2 448.8 731.8 446.8 723.8 444.8 721.2 444.8 715.8 443.2 713.2 443.2ZM736.8 469.8 737.2 470.2 737.2 475.8 736.8 476.2 736.2 475.8 736.2 470.2ZM704.2 441.2 705.2 505.2 705.8 505.8 705.8 510.2 706.2 510.2 705.2 441.2ZM854.2 437.8 837.2 447.8 854.2 450.8ZM672.2 435.2 674.2 508.8 680.2 505.2 683.2 505.2 685.8 506.2 692.8 507.2 700.2 509.2 698.8 440.2ZM635.2 428.2 637.8 500.8 644.2 497.2 659.8 500.8 664.2 501.2 663.2 464.2 667.2 443.2 667.2 434.2ZM598.8 421.2 599.2 436.8 599.8 437.2 599.8 448.2 600.2 448.8 600.2 459.8 600.8 460.2 600.8 471.2 601.2 471.8 601.2 482.8 601.8 483.2 601.8 493.2 608.8 489.8 629.2 494.2 628.8 493.8 626.8 426.8ZM563.2 414.8 563.8 426.8 564.2 427.2 564.2 436.2 564.8 436.8 564.8 446.2 565.2 446.8 565.2 455.8 565.8 456.2 565.8 465.8 566.2 466.2 566.2 475.8 566.8 476.2 566.8 485.2 567.2 485.8 574.2 482.2 594.8 486.8 591.8 419.8 589.2 419.8 581.2 417.8 578.8 417.8 573.2 416.2ZM698.2 409.8 697.2 409.8 679.2 418.8 698.2 421.8ZM528.2 407.8 528.8 418.2 529.2 418.8 529.2 426.8 529.8 427.2 529.8 435.2 530.2 435.8 530.2 443.8 530.8 444.2 530.8 452.2 531.2 452.8 531.2 460.8 531.8 461.2 531.8 469.2 532.2 469.8 532.2 477.8 533.2 478.2 538.8 475.2 541.2 475.2 560.8 479.8 560.2 473.2 560.8 472.8 561.2 473.2 561.8 476.8 561.8 472.2 561.2 471.8 561.2 462.8 560.8 462.2 560.8 453.2 560.2 452.8 558.8 414.8 557.2 413.2 552.2 412.8ZM625.2 396.8 606.2 404.8 606.2 405.2 625.8 408.8ZM590.2 390.2 570.8 398.2 570.8 398.8 590.8 402.2ZM555.8 383.8 535.2 392.2 537.8 392.2 540.8 393.2 556.2 395.8ZM1055.8 384.2 1038.8 395.8 1038.2 407.8 1036.8 413.2 1036.8 415.8 1034.8 423.8 1033.2 434.2 1031.2 442.2 1029.8 452.8 1027.8 460.8 1026.2 471.2 1024.2 479.2 1022.8 489.8 1020.8 497.8 1019.2 508.2 1017.2 516.2 1015.8 526.8 1013.8 534.8 1012.2 545.2 1010.2 553.2 1008.8 563.8 1006.8 571.8 1005.2 582.2 1003.2 590.2 1001.8 600.8 999.8 608.8 998.2 619.2 996.2 627.2 994.8 637.8 992.8 645.8 992.8 648.2 991.2 653.8 991.2 656.2 983.8 693.8 982.8 692.8 982.8 690.2 982.2 689.8 981.8 683.2 981.2 682.8 980.2 673.2 978.8 666.2 978.8 662.8 980.8 654.8 980.8 652.2 982.2 646.8 983.8 636.2 991.8 596.2 992.2 582.8 992.8 582.2 992.8 572.8 993.2 572.2 993.2 562.2 993.8 560.2 998.2 556.2 1000.8 505.2 998.8 505.2 996.2 504.2 996.8 489.2 997.2 488.8 998.2 460.8 1002.8 457.8 1003.2 456.8 1003.2 447.2 1003.8 446.8 1003.8 437.2 1004.2 436.8 1004.2 426.8 1004.8 426.2 1004.8 416.8 1005.2 416.2 1006.2 392.2 1004.2 392.2 1001.8 391.2 1002.2 379.8 989.8 387.2 988.8 390.2 987.8 423.2 987.2 423.8 987.2 434.2 986.8 434.8 986.8 445.2 986.2 445.8 986.2 456.2 985.8 456.8 985.8 467.2 985.2 467.8 985.2 478.2 984.8 478.8 984.8 489.2 984.2 489.8 984.2 500.8 983.8 501.2 983.8 511.8 983.2 512.2 983.2 522.8 982.8 523.2 982.8 533.8 982.2 534.2 982.2 544.8 981.8 545.2 981.8 555.8 981.2 556.2 981.2 567.2 980.8 567.8 980.8 578.2 980.2 578.8 980.2 589.2 979.8 589.8 979.8 600.2 979.2 600.8 979.2 611.2 978.8 611.8 978.8 622.2 978.2 622.8 978.2 633.2 977.8 633.8 977.8 644.8 977.2 645.2 977.2 649.8 976.8 650.2 976.2 649.8 975.8 643.2 974.8 639.8 974.8 636.8 973.8 633.2 973.2 626.8 972.2 623.2 971.8 616.8 970.8 613.2 970.2 606.8 969.2 603.2 968.8 596.8 967.8 593.2 967.2 586.8 966.2 583.2 965.8 576.8 965.2 576.2 962.8 556.8 961.2 549.8 961.8 548.8 961.8 540.8 962.2 540.2 962.2 528.2 962.8 527.8 963.8 498.2 959.2 497.2 960.8 454.2 965.8 450.8 968.2 386.2 966.2 386.2 963.8 385.2 963.8 375.2 964.2 373.8 950.2 381.8 948.8 434.2 948.2 434.8 948.2 448.2 947.8 448.8 947.8 453.8 948.8 453.8 949.2 454.8 927.2 469.8 916.8 803.2 1005.8 713.8 1038.2 680.2 1038.8 663.8 1039.2 663.2 1039.2 655.8 1039.8 655.2 1039.8 647.2 1040.2 646.8 1040.2 639.2 1040.8 638.8 1041.2 622.2 1041.8 621.8 1041.8 614.2 1042.2 613.8 1042.2 605.8 1042.8 605.2 1042.8 597.8 1043.2 597.2 1043.2 589.2 1043.8 588.8 1043.8 580.8 1044.2 580.2 1044.2 572.8 1044.8 572.2 1044.8 564.2 1045.2 563.8 1045.2 556.2 1045.8 555.8 1045.8 547.8 1046.2 547.2 1046.2 539.8 1046.8 539.2 1046.8 531.2 1047.2 530.8 1047.2 522.8 1047.8 522.2 1047.8 514.8 1048.2 514.2 1048.2 506.2 1048.8 505.8 1048.8 498.2 1049.2 497.8 1049.2 489.8 1049.8 489.2 1049.8 481.2 1050.2 480.8 1050.2 473.2 1050.8 472.8 1050.8 464.8 1051.2 464.2 1051.2 456.8 1051.8 456.2 1051.8 448.2 1052.2 447.8 1052.2 439.8 1052.8 439.2 1052.8 431.8 1053.2 431.2 1053.2 423.2 1053.8 422.8ZM946.2 553.2 946.8 553.8 946.8 558.2 947.8 563.2 947.8 567.8 948.8 572.8 949.2 582.2 950.2 587.2 950.8 596.8 951.8 601.8 951.8 606.2 952.8 611.2 953.2 620.8 954.2 625.8 954.8 635.2 955.8 640.2 955.8 644.8 956.8 649.8 957.2 659.2 958.2 664.2 958.2 668.8 958.8 669.2 958.8 673.8 959.2 674.2 963.2 714.2 939.8 736.8 939.2 736.2 939.2 726.2 939.8 725.8 939.8 712.8 940.2 712.2 940.2 698.8 940.8 698.2 941.8 665.8 947.2 660.8 945.2 640.8 944.8 640.2 944.2 631.2 943.8 630.8 943.8 626.8 943.2 626.2 944.8 576.8 945.2 576.2 945.2 563.2 945.8 562.8 945.8 553.8ZM1032.8 489.8 1033.2 490.2 1033.2 497.8 1032.8 498.2 1032.8 506.8 1032.2 507.2 1032.2 515.8 1031.8 516.2 1031.8 524.2 1031.2 524.8 1031.2 533.2 1030.8 533.8 1030.8 542.2 1030.2 542.8 1030.2 550.8 1029.8 551.2 1029.8 559.8 1029.2 560.2 1029.2 568.8 1028.8 569.2 1028.8 577.8 1028.2 578.2 1028.2 586.2 1027.8 586.8 1027.8 595.2 1027.2 595.8 1027.2 604.2 1026.8 604.8 1026.8 612.8 1026.2 613.2 1024.2 655.8 996.8 682.2 996.2 681.8 996.8 677.2 998.8 669.2 1000.2 658.8 1002.2 650.8 1002.2 648.2 1004.2 640.2 1005.8 629.8 1007.8 621.8 1007.8 619.2 1009.8 611.2 1011.2 600.8 1013.2 592.8 1013.2 590.2 1015.2 582.2 1016.8 571.8 1018.8 563.8 1018.8 561.2 1020.8 553.2 1022.2 542.8 1024.2 534.8 1024.2 532.2ZM1033.2 487.2 1033.8 487.8 1033.2 489.2 1032.8 488.8ZM926.8 367.8 913.2 375.2 912.2 379.8 912.2 397.2 911.8 397.8 911.8 415.2 911.2 415.8 910.2 460.8 921.8 463.2 923.8 462.2 924.2 447.8 929.2 444.2 931.2 380.2 928.8 380.2 926.2 379.2ZM890.2 362.2 875.8 369.8 875.2 401.8 874.8 402.2 874.8 427.8 874.2 428.2 874.2 453.2 873.8 454.2 888.2 445.2 888.2 441.2 893.2 437.8 894.8 374.8 890.8 374.2 889.8 373.2ZM854.2 356.8 839.2 364.2 838.8 442.2 849.2 436.2 853.2 436.8 853.2 434.8 858.2 431.8 859.2 369.2 854.2 367.8ZM819.2 351.2 804.2 358.8 803.8 431.8 809.2 428.8 812.2 429.2 813.8 430.2 796.2 440.2 798.8 440.2 818.8 444.2 818.8 428.8 824.2 425.2 824.2 364.2 824.8 363.8 824.2 363.2 821.2 363.2 819.2 362.2ZM784.8 346.2 769.2 353.2 769.8 421.8 773.2 422.2 774.2 423.2 756.2 432.8 766.2 434.2 771.8 435.8 774.2 435.8 777.2 436.8 779.8 436.8 782.8 437.8 785.2 437.8 785.2 422.8 790.2 419.8 790.2 358.2 786.8 357.8 784.8 356.8ZM751.2 340.8 735.8 347.8 736.2 415.8 735.2 416.8 717.8 425.2 717.8 425.8 722.8 426.2 733.8 428.8 736.2 428.2 736.8 429.2 741.8 429.8 750.2 431.8 752.2 430.8 752.2 416.8 757.8 413.8 757.2 411.2 757.2 352.8 752.2 352.2 751.2 351.2ZM718.8 335.8 702.2 342.8 703.8 423.2 706.2 423.2 709.2 424.2 712.8 424.2 719.8 420.8 719.8 410.8 725.2 408.2 724.8 353.8 724.2 353.2 724.2 347.8 720.8 347.2 718.8 346.2ZM685.8 330.8 669.8 337.2 669.8 349.2 668.8 352.2 667.8 360.8 666.8 363.8 666.2 369.2 665.2 372.2 664.2 380.8 663.2 383.8 662.2 392.2 660.2 402.2 661.2 402.8 655.8 405.8 641.8 411.8 654.8 413.8 665.8 416.2 668.2 416.2 671.2 417.2 674.8 417.2 687.8 410.8 687.8 405.2 693.2 402.2 692.2 342.8 686.2 341.2 686.2 332.8Z"/>
<path fill="rgb(211,118,0)" d="M946.2 553.8 943.8 626.2 944.2 626.8 945.2 640.2 945.8 640.8 945.8 644.8 946.2 645.2 946.2 649.2 946.8 649.8 947.2 658.8 947.8 659.2 947.8 663.2 948.2 663.8 948.2 667.8 948.8 668.2 949.2 677.2 949.8 677.8 949.8 681.8 950.2 682.2 950.2 686.2 950.8 686.8 953.2 711.8 962.8 714.2 959.8 683.8 959.2 683.2 959.2 678.8 958.2 673.8 957.8 664.2 956.8 659.2 956.2 649.8 955.2 644.8 955.2 640.2 954.2 635.2 953.8 625.8 952.8 620.8 952.2 611.2 951.2 606.2 951.2 601.8 950.2 596.8 949.8 587.2 948.8 582.2 948.2 572.8 947.2 567.8 947.2 563.2 946.2 558.2ZM560.8 473.2 560.8 476.8 561.2 477.2 561.2 479.8 561.8 479.8Z"/>
<path fill="rgb(255,180,0)" d="M631.2 545.8 631.2 548.2 631.8 548.8 631.8 561.8 634.2 549.8 634.2 546.2ZM1032.2 406.8 1028.8 405.8 1027.8 406.2 1026.8 413.8 1024.8 421.8 1024.8 424.2 1023.2 429.8 1023.2 432.2 1021.8 437.8 1021.8 440.2 1018.2 456.2 1018.2 458.8 1014.8 474.8 1014.8 477.2 1013.2 482.8 1013.2 485.2 1009.8 501.2 1009.8 503.8 1008.2 509.2 1008.2 511.8 999.8 554.2 999.8 556.8 994.8 580.8 994.8 583.2 989.8 607.2 989.8 609.8 981.2 652.2 981.2 654.8 979.2 662.8 979.8 669.8 980.2 670.2 982.8 689.8 983.8 693.2 985.2 682.8 987.2 674.8 988.8 664.2 990.8 656.2 992.2 645.8 994.2 637.8 995.8 627.2 997.8 619.2 999.2 608.8 1001.2 600.8 1002.8 590.2 1004.8 582.2 1006.2 571.8 1008.2 563.8 1009.8 553.2 1011.8 545.2 1013.2 534.8 1015.2 526.8 1016.8 516.2 1018.8 508.2 1020.2 497.8 1022.2 489.8 1023.8 479.2 1025.8 471.2 1027.2 460.8 1029.2 452.8 1030.8 442.2 1037.8 407.2ZM669.2 347.8 664.2 347.2 663.8 346.8 661.8 346.8 661.2 347.8 660.2 356.2 659.2 359.2 658.2 367.8 657.2 370.8 657.2 373.2 656.8 373.8 656.8 376.2 656.2 376.8 656.2 379.2 655.2 382.2 655.2 384.8 654.8 385.2 654.8 387.8 651.8 403.8 656.2 401.8 659.2 401.8 659.8 402.2 660.8 395.2 661.8 392.2 662.8 383.8 663.8 380.8 663.8 378.2 664.2 377.8 664.2 375.2 664.8 374.8 664.8 372.2 665.8 369.2 665.8 366.8 666.2 366.2 666.2 363.8 667.2 360.8Z"/>
<path stroke="#b8b8b8" stroke-width="1" fill="none" d="M419.4,717.5 L376.2,236.8 M941.2,876.8 L962.8,318.3 M1135.4,660.9 L1173.1,208.8 M376.2,236.8 L962.8,318.3 M962.8,318.3 L1173.1,208.8 M1173.1,208.8 L675.0,158.7 M675.0,158.7 L376.2,236.8"/>
<line x1="419.3" y1="717" x2="412.2" y2="645" stroke="#3535dd" stroke-width="3.4"/>
<line x1="419.3" y1="717" x2="412.2" y2="645" stroke="#5a5af0" stroke-width="1" stroke-dasharray="1 1.5"/>
<path d="M405.8 621.8 L415.2 623.6 L407.3 636.3 L416.2 638.4" fill="none" stroke="#1414f0" stroke-width="2.2" stroke-linejoin="miter"/>
<line x1="419.3" y1="717" x2="471.3" y2="686.3" stroke="#11ee11" stroke-width="2"/>
<path d="M476.4 683.2 L490.4 678.3 M481.3 676.5 L483.3 681.3 L486 676.8" fill="none" stroke="#11ee11" stroke-width="1.8"/>
<line x1="419.3" y1="717" x2="482.2" y2="737.2" stroke="#ff1010" stroke-width="3.2"/>
<path d="M485.3 741.8 L505 739.8 M493 737.2 L498 745" fill="none" stroke="#ff1010" stroke-width="2.6"/>
</g></svg>

<!-- TOOLBAR -->
<div id="tb" class="abs"></div>

<!-- BUTTON ICONS -->
<svg class="abs" style="left:0;top:0" width="280" height="1070">
<defs>
 <linearGradient id="cl" x1="0" y1="0" x2="0" y2="1"><stop offset="0" stop-color="#c4c4c4"/><stop offset="1" stop-color="#a2a2a2"/></linearGradient>
 <linearGradient id="cr" x1="0" y1="0" x2="0" y2="1"><stop offset="0" stop-color="#9a9a9a"/><stop offset="1" stop-color="#7a7a7a"/></linearGradient>
 <linearGradient id="gck" x1="0" y1="0" x2="1" y2="1"><stop offset="0" stop-color="#9fd63a"/><stop offset="1" stop-color="#3a9a22"/></linearGradient>
</defs>
<g transform="translate(45.7 459.8)">
  <path d="M0 3 L11 0 L22.5 3 L10.5 6 Z" fill="#b9b9b9"/>
  <path d="M0 3 L10.5 6 L10.5 22.5 L1.5 18.5 Z" fill="url(#cl)"/>
  <path d="M10.5 6 L22.5 3 L21 18.5 L10.5 22.5 Z" fill="url(#cr)"/>
 </g>
<rect x="49.3" y="469.6" width="15.5" height="2" fill="#2f7fd0"/>
<rect x="56" y="463.8" width="2.2" height="14" fill="#2a78cc"/>
<g transform="translate(149.7 459.8)">
  <path d="M0 3 L11 0 L22.5 3 L10.5 6 Z" fill="#b9b9b9"/>
  <path d="M0 3 L10.5 6 L10.5 22.5 L1.5 18.5 Z" fill="url(#cl)"/>
  <path d="M10.5 6 L22.5 3 L21 18.5 L10.5 22.5 Z" fill="url(#cr)"/>
 </g>
<rect x="152" y="469" width="17.6" height="3.8" fill="#e0262a"/>
<!-- center and arrange -->
<g>
 <path d="M64.3 497.4 L62.3 500.5 L66.3 500.5 Z M64.3 508.7 L62.3 505.6 L66.3 505.6 Z" fill="#333"/>
 <rect x="63.7" y="500" width="1.2" height="6" fill="#333"/>
 <rect x="67.9" y="496.8" width="9.8" height="3.7" fill="#b0b0b0"/>
 <rect x="79.3" y="497" width="4.6" height="3.5" fill="#c0c0c0"/>
 <rect x="67.9" y="501.8" width="9.8" height="5.6" fill="#a8a8a8"/>
 <rect x="78.5" y="502" width="7" height="3.6" fill="#b8b8b8"/>
 <rect x="68.5" y="508" width="8" height="1.5" fill="#c8c8c8"/>
 <rect x="78" y="508.2" width="5.6" height="5" fill="#a8a8a8"/>
 <rect x="67.4" y="511.8" width="6" height="1.2" fill="#333"/>
 <path d="M76 512.4 L73 510.3 L73 514.5 Z" fill="#333"/>
</g>
<!-- add -->
<ellipse cx="67.5" cy="959.5" rx="10" ry="1" fill="#000" opacity="0.12"/>
<g transform="translate(60.8 942.3)">
  <circle r="3.2" fill="none" stroke="#a3a3a3" stroke-width="2.6"/>
  <circle r="4.4" fill="none" stroke="#a3a3a3" stroke-width="1.6" stroke-dasharray="1.5 1.27"/>
 </g>
<g transform="translate(71.7 945.6) scale(1.2) translate(-71.7 -945.6)"><g transform="translate(71.7 945.6)">
  <circle r="3.2" fill="none" stroke="#a3a3a3" stroke-width="2.6"/>
  <circle r="4.4" fill="none" stroke="#a3a3a3" stroke-width="1.6" stroke-dasharray="1.5 1.27"/>
 </g></g>
<g transform="translate(63.4 955.2)">
  <circle r="3.2" fill="none" stroke="#a3a3a3" stroke-width="2.6"/>
  <circle r="4.4" fill="none" stroke="#a3a3a3" stroke-width="1.6" stroke-dasharray="1.5 1.27"/>
 </g>
<rect x="59.3" y="948.6" width="16" height="2.2" fill="#2f7fd0"/>
<rect x="65.4" y="943.4" width="2.3" height="13.4" fill="#2a78cc"/>
<!-- delete -->
<ellipse cx="168" cy="959.5" rx="10" ry="1" fill="#000" opacity="0.12"/>
<g transform="translate(161.6 942.3)">
  <circle r="3.2" fill="none" stroke="#a3a3a3" stroke-width="2.6"/>
  <circle r="4.4" fill="none" stroke="#a3a3a3" stroke-width="1.6" stroke-dasharray="1.5 1.27"/>
 </g>
<g transform="translate(171.9 945.6) scale(1.2) translate(-171.9 -945.6)"><g transform="translate(171.9 945.6)">
  <circle r="3.2" fill="none" stroke="#a3a3a3" stroke-width="2.6"/>
  <circle r="4.4" fill="none" stroke="#a3a3a3" stroke-width="1.6" stroke-dasharray="1.5 1.27"/>
 </g></g>
<g transform="translate(165.2 955.2)">
  <circle r="3.2" fill="none" stroke="#a3a3a3" stroke-width="2.6"/>
  <circle r="4.4" fill="none" stroke="#a3a3a3" stroke-width="1.6" stroke-dasharray="1.5 1.27"/>
 </g>
<rect x="159" y="948" width="17.5" height="3.8" fill="#e0262a"/>
<!-- edit process settings -->
<ellipse cx="68" cy="993.6" rx="10" ry="1" fill="#000" opacity="0.12"/>
<g transform="translate(61.9 976.4)">
  <circle r="3.2" fill="none" stroke="#a3a3a3" stroke-width="2.6"/>
  <circle r="4.4" fill="none" stroke="#a3a3a3" stroke-width="1.6" stroke-dasharray="1.5 1.27"/>
 </g>
<g transform="translate(71.7 980) scale(1.3) translate(-71.7 -980)"><g transform="translate(71.7 980.0)">
  <circle r="3.2" fill="none" stroke="#a3a3a3" stroke-width="2.6"/>
  <circle r="4.4" fill="none" stroke="#a3a3a3" stroke-width="1.6" stroke-dasharray="1.5 1.27"/>
 </g></g>
<g transform="translate(65.0 988.8)">
  <circle r="3.2" fill="none" stroke="#a3a3a3" stroke-width="2.6"/>
  <circle r="4.4" fill="none" stroke="#a3a3a3" stroke-width="1.6" stroke-dasharray="1.5 1.27"/>
 </g>
<!-- prepare -->
<ellipse cx="82" cy="1040.3" rx="10" ry="1" fill="#000" opacity="0.12"/>
<path d="M74.5 1019 L85 1019 L89 1023 L89 1040 L74.5 1040 Z" fill="#dcdcdc"/>
<path d="M85 1019 L89 1023 L85 1023 Z" fill="#8a8a8a"/>
<path d="M75.5 1021.5h9M75.5 1025.5h12M75.5 1027.5h12M75.5 1029.5h12M75.5 1031.5h12M75.5 1033.5h12M75.5 1036.5h12" stroke="#c2c2c2" stroke-width="1" stroke-dasharray="1.6 0.8"/>
<path d="M80.8 1033.6 L86 1038.6 L93.6 1029.8" fill="none" stroke="url(#gck)" stroke-width="3.6" stroke-linejoin="miter"/>
</svg>

<!-- TOOLBAR ICONS -->
<svg class="abs" style="left:1311px;top:22px" width="44" height="1048">
<defs>
 <linearGradient id="selbg" x1="0" y1="0" x2="1" y2="0"><stop offset="0" stop-color="#d2d2d2"/><stop offset="1" stop-color="#b4b4b4"/></linearGradient>
 <linearGradient id="dotl" x1="0" y1="0" x2="1" y2="0"><stop offset="0" stop-color="#ececec"/></linearGradient>
</defs>
<g transform="translate(-1311 -22)">
 <!-- dotted separators -->
 <path d="M1319 31.5h24" stroke="#7c7c7c" stroke-width="1.2" stroke-dasharray="1.3 4.7"/>
 <path d="M1314 220.5h41M1314 414.5h41M1314 608.4h41M1314 664h41" stroke="#8a8a8a" stroke-width="1" stroke-dasharray="1 3"/>
 <!-- selected backgrounds -->
 <path d="M1312 40 Q1312 34 1318 34 L1349 34 Q1355 34 1355 40 L1355 76 L1312 76 Z" fill="url(#selbg)"/>
 <path d="M1312 428 Q1312 422 1318 422 L1349 422 Q1355 422 1355 428 L1355 464 L1312 464 Z" fill="url(#selbg)"/>
 <path d="M1312 474 Q1312 468 1318 468 L1349 468 Q1355 468 1355 474 L1355 510 L1312 510 Z" fill="url(#selbg)"/>
 <!-- select arrow -->
 <path d="M1324.3 43.2 L1341.2 52 L1335 55.6 L1341.8 64.4 L1338.3 66.8 L1331.9 58 L1326.5 62.4 Z" fill="#59595c"/>
 <!-- move -->
 <g fill="#58585a">
  <path d="M1333 85.5 L1329 92.8 L1337 92.8 Z M1333 116.1 L1329 108.8 L1337 108.8 Z M1317.5 100.8 L1324.8 96.8 L1324.8 104.8 Z M1348.5 100.8 L1341.2 96.8 L1341.2 104.8 Z"/>
  <rect x="1332.1" y="92" width="1.8" height="3.8"/><rect x="1332.1" y="105.8" width="1.8" height="3.8"/>
  <rect x="1324" y="99.9" width="4" height="1.8"/><rect x="1338" y="99.9" width="4" height="1.8"/>
 </g>
 <rect x="1330.5" y="98.6" width="4.6" height="4.5" fill="#8e8e8e"/>
 <!-- scale -->
 <rect x="1323.5" y="136.5" width="25" height="16" fill="none" stroke="#555" stroke-width="1.8"/>
 <path d="M1333 147.5 L1340.5 141.5" stroke="#555" stroke-width="2.2"/>
 <path d="M1345.5 138.5 L1337 139.6 L1342.8 145.3 Z" fill="#555"/>
 <rect x="1318.5" y="148.5" width="11" height="9.5" fill="none" stroke="#8f8f8f" stroke-width="1.6"/>
 <rect x="1323.5" y="148.5" width="6" height="4.5" fill="none" stroke="#8f8f8f" stroke-width="1.4"/>
 <!-- rotate -->
 <path d="M1322 189.5 A12 12 0 0 1 1346 191" fill="none" stroke="#555" stroke-width="3.2"/>
 <path d="M1318 191.5 L1326.5 188.5 L1321 182 Z" fill="#555"/>
 <path d="M1319.5 194.3 A12.5 12.5 0 0 0 1343 200" fill="none" stroke="#9a9a9a" stroke-width="3.2"/>
 <path d="M1347.5 196 L1339 198.5 L1345.2 205 Z" fill="#9a9a9a"/>
 <!-- cubes -->
 <g id="tcube">
  <ellipse cx="1334" cy="262.5" rx="13" ry="2" fill="#000" opacity="0.10"/>
  <path d="M1318.2 237.7 L1333 234.1 L1348.2 237.7 L1336.4 242.7 Z" fill="#7799b3"/>
  <path d="M1318.2 237.7 L1336.4 242.7 L1336.4 263.2 L1320 257 Z" fill="#7a9dbb"/>
  <path d="M1336.4 242.7 L1348.2 237.7 L1346.5 256.5 L1336.4 263.2 Z" fill="#6a8aa5"/>
 </g>
 <g transform="translate(0 46)">
  <ellipse cx="1334" cy="262.5" rx="13" ry="2" fill="#000" opacity="0.10"/>
  <path d="M1318.2 237.7 L1333 234.1 L1348.2 237.7 L1336.4 242.7 Z" fill="#7799b3"/>
  <path d="M1318.2 237.7 L1336.4 242.7 L1336.4 263.2 L1320 257 Z" fill="#bcbcbc"/>
  <path d="M1336.4 242.7 L1348.2 237.7 L1346.5 256.5 L1336.4 263.2 Z" fill="#8c8c8c"/>
 </g>
 <g transform="translate(0 92)">
  <ellipse cx="1334" cy="262.5" rx="13" ry="2" fill="#000" opacity="0.10"/>
  <path d="M1318.2 237.7 L1333 234.1 L1348.2 237.7 L1336.4 242.7 Z" fill="#a6a6a6"/>
  <path d="M1318.2 237.7 L1336.4 242.7 L1336.4 263.2 L1320 257 Z" fill="#7a9dbb"/>
  <path d="M1336.4 242.7 L1348.2 237.7 L1346.5 256.5 L1336.4 263.2 Z" fill="#8c8c8c"/>
 </g>
 <g transform="translate(0 138.3)">
  <ellipse cx="1334" cy="262.5" rx="13" ry="2" fill="#000" opacity="0.10"/>
  <path d="M1318.2 237.7 L1333 234.1 L1348.2 237.7 L1336.4 242.7 Z" fill="#a6a6a6"/>
  <path d="M1318.2 237.7 L1336.4 242.7 L1336.4 263.2 L1320 257 Z" fill="#bcbcbc"/>
  <path d="M1336.4 242.7 L1348.2 237.7 L1346.5 256.5 L1336.4 263.2 Z" fill="#6a8aa5"/>
 </g>
 <!-- axes icon -->
 <path d="M1327.3 449 L1327.3 431" stroke="#1010f0" stroke-width="1.8"/>
 <path d="M1327.3 427.5 L1324.8 433 L1329.8 433 Z" fill="#1010f0"/>
 <path d="M1327.3 449 L1339 443" stroke="#10d010" stroke-width="1.6"/>
 <path d="M1342.2 441.5 L1336.2 441.8 L1338.8 446 Z" fill="#10d010"/>
 <path d="M1327.3 449 L1340 454.5" stroke="#f01010" stroke-width="1.8"/>
 <path d="M1345 456.6 L1339.5 451.5 L1337.8 456.5 Z" fill="#f01010"/>
 <!-- solid cube -->
 <ellipse cx="1334" cy="502.5" rx="13" ry="2" fill="#000" opacity="0.08"/>
 <path d="M1318.2 478.1 L1333 474.5 L1348.2 478.1 L1336.4 483.1 Z" fill="#a8a8a8"/>
 <path d="M1318.2 478.1 L1336.4 483.1 L1336.4 503.6 L1320 497.4 Z" fill="#b4b4b4"/>
 <path d="M1336.4 483.1 L1348.2 478.1 L1346.5 496.9 L1336.4 503.6 Z" fill="#959595"/>
 <!-- wireframe cube -->
 <g fill="none" stroke="#333" stroke-width="1">
  <path d="M1318 523 L1333.5 519.5 L1348 523.5 L1336.5 528.5 Z"/>
  <path d="M1318 523 L1320.5 543 L1336.5 549 L1346.5 542 L1348 523.5"/>
  <path d="M1336.5 528.5 L1336.5 549"/>
  <path d="M1333.5 519.5 L1333 538 L1320.5 543 M1333 538 L1346.5 542"/>
 </g>
 <!-- arrow on plane -->
 <path d="M1320.5 586 L1339 584.5 L1346.5 588.5 L1329 593.6 Z" fill="#a2a2a2"/>
 <path d="M1330.8 589 L1333 572" stroke="#1212e8" stroke-width="1.8"/>
 <path d="M1333.6 567.3 L1330.6 574 L1335.4 574.6 Z" fill="#1212e8"/>
 <!-- cross-section -->
 <path d="M1318.4 625.3 L1331.1 622.5 L1339.1 623.5 L1326 628.2 Z" fill="#b4b4b4"/>
 <path d="M1318.4 625.3 L1326 628.2 L1326.4 646.5 L1320.2 644.4 Z" fill="#c0c0c0"/>
 <path d="M1326 628.2 L1339.1 623.5 L1337.6 640.7 L1326.7 646.9 Z" fill="#a34c4e"/>
 <path d="M1326 628.2 L1332 626.5 L1332 638.5 L1326.5 641 Z" fill="#7f2a2c" opacity="0.8"/>
 <g fill="none" stroke="#2e2e2e" stroke-width="0.9">
  <path d="M1326 628.2 L1336.5 631.6 L1347.5 625.5 M1336.5 631.6 L1336.5 650.5 L1346.7 643.1 L1347.5 625.5 M1326.7 646.9 L1336.5 650.5"/>
 </g>
 <path d="M1347.5 625.5 L1339.1 623.5 M1337.6 640.7 L1346.7 643.1" fill="none" stroke="#777" stroke-width="0.7"/>
 <!-- gear -->
 <circle cx="1332.8" cy="693.1" r="10.5" fill="none" stroke="#6d6d6d" stroke-width="5"/>
 <circle cx="1332.8" cy="693.1" r="13.6" fill="none" stroke="#6d6d6d" stroke-width="3.4" stroke-dasharray="3.6 3.52"/>
 <!-- supports -->
 <path d="M1320 727.5 L1344 726 L1348 728.5 L1348 733.5 L1324 735 L1320 733 Z" fill="#bdbdbd"/>
 <path d="M1344 731 L1348 728.5 L1348 733.5 L1344 735 Z" fill="#9a9a9a"/>
 <path d="M1320 733 L1328 735.5 L1328 751.5 L1320 746 Z" fill="#b3b3b3"/>
 <path d="M1328 735.5 L1330 735 L1330 750 L1328 751.5 Z" fill="#8a8a8a"/>
 <path d="M1333 736 L1338 735.5 L1338 752 L1333 751 Z" fill="#7fa3c2"/>
 <path d="M1340 735.5 L1345 735 L1345 753 L1340 752 Z" fill="#7fa3c2"/>
</g>
</svg>

<div id="status" class="abs"><div class="t">Successfully parsed model with 480 triangles</div></div>
</body></html>
